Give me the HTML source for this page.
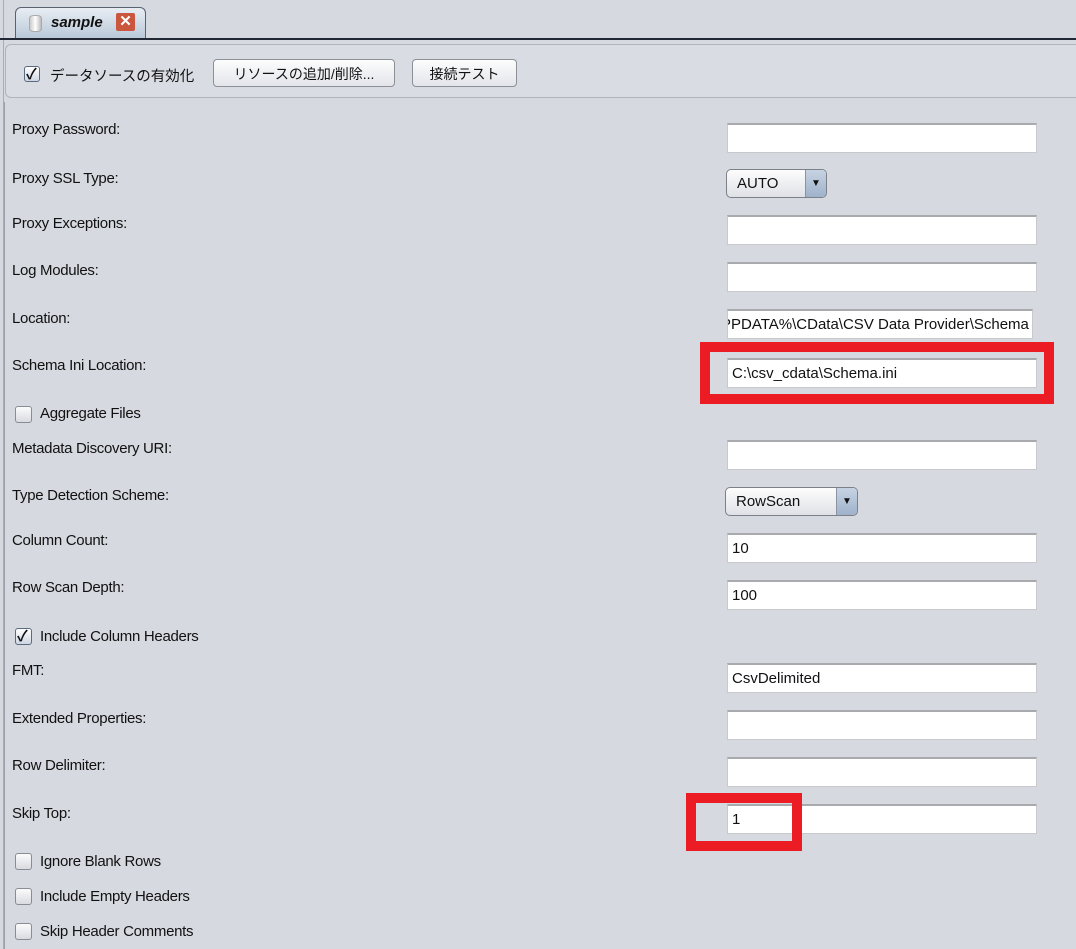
<!DOCTYPE html>
<html><head><meta charset="utf-8"><style>
body{margin:0;width:1076px;height:949px;background:#d6d9e0;position:relative;overflow:hidden;font-family:"Liberation Sans","Noto Sans CJK JP",sans-serif;font-size:15px;color:#111}
.a{position:absolute}
.lbl{position:absolute;left:12px;font-size:15px;letter-spacing:-0.3px}
.in{position:absolute;left:727px;width:304px;height:27px;background:#fff;border:1px solid #c8c9cc;border-top:2px solid #a9aaad;box-sizing:content-box;font-size:15px;line-height:28px;padding-left:4px;overflow:hidden;white-space:nowrap}
.cb{position:absolute;left:15px;width:15px;height:15px;border:1px solid #888c94;border-radius:3px;background:linear-gradient(#fbfbfc,#d9dbe0)}
.cbl{position:absolute;left:40px;font-size:15px;letter-spacing:-0.3px}
.btn{position:absolute;top:59px;height:28px;border:1px solid #8d9097;border-radius:4px;background:linear-gradient(#fdfdfd,#e3e5ea);font-size:14px;line-height:28px;text-align:center;box-sizing:border-box}
.combo{position:absolute;height:29px;border:1px solid #7b8089;border-radius:5px;background:linear-gradient(#fdfdfd,#dfe1e6);box-sizing:border-box;font-size:15px;line-height:28px;padding-left:10px}
.combo .ar{position:absolute;right:0;top:0;width:20px;height:27px;border-left:1px solid #8a93a3;background:linear-gradient(#c7d3e3,#9fb2cb);border-radius:0 4px 4px 0;font-size:10px;text-align:center;line-height:27px;padding:0}
.red{position:absolute;border:10px solid #ec1c24;box-sizing:border-box}
</style></head><body>
<div class="a" style="left:3px;top:0;width:1px;height:949px;background:#aab"></div>
<div class="a" style="left:15px;top:7px;width:131px;height:32px;border:1px solid #5a6270;border-bottom:none;border-radius:6px 6px 0 0;background:linear-gradient(#e8edf3,#b8c8d8);box-sizing:border-box"></div>
<div class="a" style="left:29px;top:15px;width:11px;height:15px;border-radius:5px/3px;background:linear-gradient(90deg,#ccc,#fff,#bbb);border:1px solid #aaa"></div>
<div class="a" style="left:51px;top:14px;font-weight:bold;font-style:italic;font-size:15px">sample</div>
<div class="a" style="left:116px;top:13px;width:19px;height:18px;background:#c9563d;border-radius:2px;color:#fff;font-weight:bold;text-align:center;line-height:18px;font-size:15px">✕</div>
<div class="a" style="left:0;top:38px;width:1076px;height:2px;background:#222833"></div>
<div class="a" style="left:5px;top:44px;width:1080px;height:54px;border:1px solid #b0b3ba;border-radius:6px;background:#d9dce2;box-sizing:border-box"></div>
<div class="cb" style="top:66px;left:24px;width:14px;height:14px;background:linear-gradient(#fff,#cfd6e2);border-color:#5a6a80"></div>
<div class="a" style="left:26px;top:63px;font-size:15px;font-weight:bold">✓</div>
<div class="a" style="left:50px;top:65px;font-size:14.5px">データソースの有効化</div>
<div class="btn" style="left:213px;width:182px">リソースの追加/削除...</div>
<div class="btn" style="left:412px;width:105px">接続テスト</div>
<div class="a" style="left:4px;top:102px;width:1px;height:847px;background:#9ea2aa"></div>

<div class="lbl" style="top:121px">Proxy Password:</div><div class="in" style="top:123px"></div>
<div class="lbl" style="top:170px">Proxy SSL Type:</div><div class="combo" style="left:726px;top:169px;width:101px">AUTO<span class="ar">▼</span></div>
<div class="lbl" style="top:215px">Proxy Exceptions:</div><div class="in" style="top:215px"></div>
<div class="lbl" style="top:262px">Log Modules:</div><div class="in" style="top:262px"></div>
<div class="lbl" style="top:310px">Location:</div><div class="in" style="top:309px;padding-left:0"><span style="margin-left:-7px">PPDATA%\CData\CSV Data Provider\Schema</span></div>
<div class="lbl" style="top:357px">Schema Ini Location:</div><div class="in" style="top:358px">C:\csv_cdata\Schema.ini</div>
<div class="cb" style="top:406px"></div><div class="cbl" style="top:405px">Aggregate Files</div>
<div class="lbl" style="top:440px">Metadata Discovery URI:</div><div class="in" style="top:440px"></div>
<div class="lbl" style="top:487px">Type Detection Scheme:</div><div class="combo" style="left:725px;top:487px;width:133px">RowScan<span class="ar">▼</span></div>
<div class="lbl" style="top:532px">Column Count:</div><div class="in" style="top:533px">10</div>
<div class="lbl" style="top:579px">Row Scan Depth:</div><div class="in" style="top:580px">100</div>
<div class="cb" style="top:628px;background:linear-gradient(#fff,#cfd6e2);border-color:#5a6a80"></div><div class="a" style="left:17px;top:625px;font-size:15px;font-weight:bold">✓</div><div class="cbl" style="top:628px">Include Column Headers</div>
<div class="lbl" style="top:662px">FMT:</div><div class="in" style="top:663px">CsvDelimited</div>
<div class="lbl" style="top:710px">Extended Properties:</div><div class="in" style="top:710px"></div>
<div class="lbl" style="top:757px">Row Delimiter:</div><div class="in" style="top:757px"></div>
<div class="lbl" style="top:805px">Skip Top:</div><div class="in" style="top:804px">1</div>
<div class="cb" style="top:853px"></div><div class="cbl" style="top:853px">Ignore Blank Rows</div>
<div class="cb" style="top:888px"></div><div class="cbl" style="top:888px">Include Empty Headers</div>
<div class="cb" style="top:923px"></div><div class="cbl" style="top:923px">Skip Header Comments</div>

<div class="red" style="left:700px;top:342px;width:354px;height:62px"></div>
<div class="red" style="left:686px;top:793px;width:116px;height:58px"></div>
</body></html>
